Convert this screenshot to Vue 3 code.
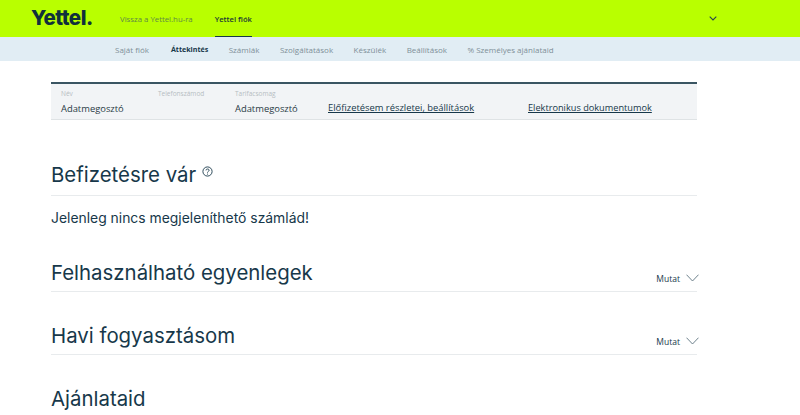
<template>
  <div class="page">
    <header class="topbar">
      <div class="logo">Yettel.</div>
      <a class="top-link">Vissza a Yettel.hu-ra</a>
      <a class="top-link active">Yettel fiók</a>
      <svg class="top-chevron" width="8" height="5" viewBox="0 0 8 5">
        <path d="M0.7 0.7 L4 3.9 L7.3 0.7" fill="none" stroke="#27434f" stroke-width="1.1" />
      </svg>
    </header>

    <nav class="subnav">
      <a v-for="item in navItems" :key="item" :class="{ current: item === 'Áttekintés' }">{{ item }}</a>
    </nav>

    <main class="content">
      <section class="info-card">
        <div class="info-col col-name">
          <span class="info-label">Név</span>
          <span class="info-value">Adatmegosztó</span>
        </div>
        <div class="info-col col-phone">
          <span class="info-label">Telefonszámod</span>
        </div>
        <div class="info-col col-plan">
          <span class="info-label">Tarifacsomag</span>
          <span class="info-value">Adatmegosztó</span>
        </div>
        <a class="info-link link-one">Előfizetésem részletei, beállítások</a>
        <a class="info-link link-two">Elektronikus dokumentumok</a>
      </section>

      <section class="block first">
        <div class="block-head">
          <h2>Befizetésre vár</h2>
          <svg class="help" width="11" height="11" viewBox="0 0 11 11">
            <circle cx="5.5" cy="5.5" r="4.6" fill="none" stroke="#17384a" stroke-width="0.9" />
            <path d="M4 4.4 C4 2.5 7.1 2.6 7.1 4.3 C7.1 5.4 5.5 5.4 5.5 6.6" fill="none" stroke="#17384a" stroke-width="0.9" />
            <circle cx="5.5" cy="8" r="0.55" fill="#17384a" />
          </svg>
        </div>
        <p class="empty">Jelenleg nincs megjeleníthető számlád!</p>
      </section>

      <section class="block toggle balances">
        <div class="block-head">
          <h2>Felhasználható egyenlegek</h2>
          <div class="show">
            <span>Mutat</span>
            <svg width="13" height="8" viewBox="0 0 13 8">
              <path d="M0.5 0.7 L6.5 7 L12.5 0.7" fill="none" stroke="#5d7480" stroke-width="0.9" />
            </svg>
          </div>
        </div>
      </section>

      <section class="block toggle usage">
        <div class="block-head">
          <h2>Havi fogyasztásom</h2>
          <div class="show">
            <span>Mutat</span>
            <svg width="13" height="8" viewBox="0 0 13 8">
              <path d="M0.5 0.7 L6.5 7 L12.5 0.7" fill="none" stroke="#5d7480" stroke-width="0.9" />
            </svg>
          </div>
        </div>
      </section>

      <h2 class="offers">Ajánlataid</h2>
    </main>
  </div>
</template>

<script setup>
const navItems = ['Saját fiók', 'Áttekintés', 'Számlák', 'Szolgáltatások', 'Készülék', 'Beállítások', '% Személyes ajánlataid']
</script>

<style>
html, body {
  margin: 0;
  height: 415px;
  overflow: hidden;
  background: #fff;
}
</style>

<style scoped>
.page {
  height: 415px;
  overflow: hidden;
  font-family: "Open Sans", "Noto Sans", sans-serif;
  color: #17384a;
}

.topbar {
  height: 37px;
  background: #b9ff00;
  display: flex;
  align-items: stretch;
  padding-left: 31px;
  box-sizing: border-box;
}

.logo {
  width: 89px;
  font-family: "Inter", sans-serif;
  font-weight: 800;
  font-size: 20.5px;
  line-height: 36px;
  letter-spacing: -0.5px;
  color: #10303c;
}

.top-link {
  font-size: 7.8px;
  line-height: 38px;
  color: #5f8a45;
  margin-right: 22px;
}

.top-link.active {
  font-weight: 600;
  font-size: 7.6px;
  color: #1c3b35;
  height: 36px;
  border-bottom: 1px solid #17384a;
  margin-right: 0;
}

.top-chevron {
  margin-left: 457px;
  margin-top: 16px;
}

.subnav {
  height: 24px;
  background: #e1edf4;
  display: flex;
  align-items: center;
  gap: 20.5px;
  padding-left: 115px;
  font-size: 8px;
  color: #7f8f98;
}

.subnav .current {
  font-weight: 700;
  font-size: 7.1px;
  margin-left: 1.5px;
  color: #17384a;
}

.content {
  padding: 21px 103px 0 51px;
}

.info-card {
  height: 38px;
  background: #f2f4f6;
  border-top: 2px solid #3a5562;
  border-bottom: 1px solid #dfe3e5;
  box-sizing: border-box;
  display: flex;
  align-items: flex-end;
  padding: 0 0 4px 10px;
  font-size: 9.4px;
}

.info-col {
  display: flex;
  flex-direction: column;
  height: 28px;
  flex-shrink: 0;
}

.col-name { width: 97px; }
.col-phone { width: 77px; }
.col-plan { width: 93px; }

.info-label {
  font-size: 6.5px;
  line-height: 10px;
  color: #b6bdc2;
  margin-top: 2px;
}

.info-value {
  margin-top: 3px;
  line-height: 14px;
  color: #2a3c46;
}

.info-link {
  line-height: 14px;
  color: #17384a;
  text-decoration: underline;
  white-space: nowrap;
}

.link-one {
  width: 200px;
  flex-shrink: 0;
}

.link-two {
  font-size: 9.2px;
}

.block-head {
  display: flex;
  align-items: center;
  border-bottom: 1px solid #e8ebed;
}

h2 {
  margin: 0;
  font-family: "Inter", sans-serif;
  font-weight: 400;
  font-size: 20.4px;
  line-height: 30px;
  color: #17384a;
}

.first {
  margin-top: 39px;
}

.first .block-head {
  height: 37px;
  padding-bottom: 5px;
  box-sizing: border-box;
}

.help {
  margin: 0 0 6px 6px;
}

.empty {
  margin: 12px 0 0;
  font-family: "Inter", sans-serif;
  font-size: 13.9px;
  line-height: 20px;
}

.toggle .block-head {
  justify-content: space-between;
  height: 36px;
  padding-bottom: 1px;
  box-sizing: border-box;
}

.balances { margin-top: 28px; }
.usage { margin-top: 27px; }

.show {
  display: flex;
  align-items: center;
  gap: 6px;
  font-size: 8.5px;
  margin-top: 10px;
  margin-right: -2px;
}

.offers {
  margin-top: 29px;
}
</style>
